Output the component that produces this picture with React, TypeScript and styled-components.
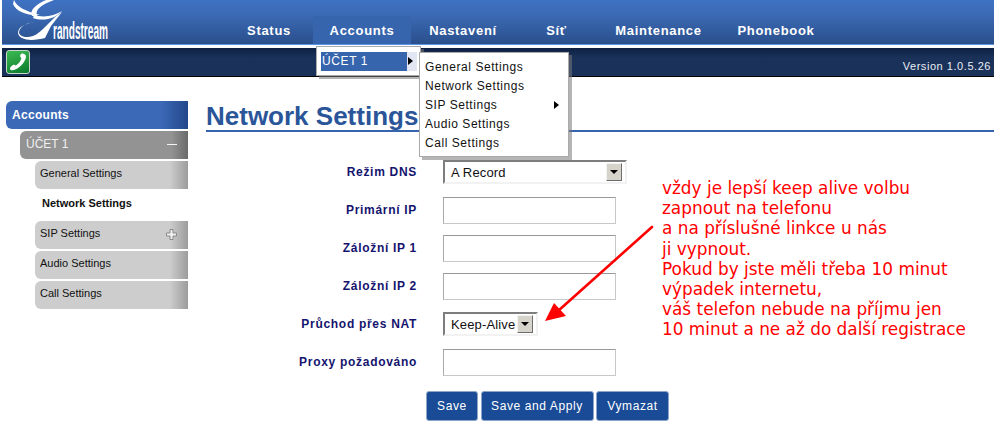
import React from "react";
import styled, { createGlobalStyle } from "styled-components";

const Global = createGlobalStyle`
  html, body { margin: 0; padding: 0; background: #fff; }
  body { font-family: "Liberation Sans", Arial, sans-serif; overflow: hidden; }
  * { box-sizing: border-box; }
`;

const Page = styled.div`
  position: relative;
  width: 994px;
  height: 439px;
  padding-left: 2px;
  overflow: hidden;
`;

const NavBar = styled.header`
  position: relative;
  display: flex;
  align-items: flex-end;
  height: 45px;
  padding-left: 223px;
  background: linear-gradient(#3f72c4 0%, #3c6bb6 30%, #2a4f8c 100%);
  border-bottom: 1px solid #5b93e6;
`;

const LogoSlot = styled.svg`
  position: absolute;
  left: -2px;
  top: 0;
`;

const NavItem = styled.div<{ $w: number; $active?: boolean }>`
  width: ${(p) => p.$w}px;
  height: 28px;
  display: flex;
  align-items: center;
  justify-content: center;
  color: #fff;
  font-size: 13px;
  font-weight: 700;
  letter-spacing: 0.7px;
  background: ${(p) => (p.$active ? "#3765ad" : "transparent")};
`;

const StatusBar = styled.div`
  display: flex;
  align-items: center;
  justify-content: space-between;
  height: 29px;
  margin-top: 3px;
  padding: 0 3px 0 4px;
  background: linear-gradient(#0e2143 0%, #1a3159 35%, #1a3159 100%);
  border-bottom: 1px solid #000;
`;

const PhoneBadge = styled.div`
  width: 24px;
  height: 24px;
  display: flex;
  align-items: center;
  justify-content: center;
  border: 1px solid #c9d6c9;
  border-radius: 3px;
  background: linear-gradient(160deg, #3dbb55, #0a7a2a);
`;

const Version = styled.span`
  padding-top: 8px;
  color: #e8edf5;
  font-size: 11px;
  letter-spacing: 0.55px;
`;

const Body = styled.div`
  display: flex;
  padding: 24px 0 0 4px;
`;

const Sidebar = styled.nav`
  width: 182px;
  display: flex;
  flex-direction: column;
  gap: 2px;
`;

const SideHead = styled.div`
  height: 28px;
  display: flex;
  align-items: center;
  padding-left: 6px;
  color: #fff;
  font-size: 12px;
  font-weight: 700;
  letter-spacing: 0.3px;
  border-radius: 6px 0 0 6px;
  background: linear-gradient(90deg, #3b69b7 0%, #3b69b7 85%, #24478a 100%);
`;

const SideGroup = styled.div`
  height: 28px;
  margin-left: 14px;
  display: flex;
  align-items: center;
  justify-content: space-between;
  padding: 0 11px 2px 6px;
  color: #f0f0f0;
  font-size: 12px;
  border-radius: 6px 0 0 6px;
  background: linear-gradient(90deg, #939393 0%, #939393 90%, #6a6a6a 100%);
`;

const SideItem = styled.div<{ $current?: boolean }>`
  height: 28px;
  margin-left: 29px;
  display: flex;
  align-items: center;
  justify-content: space-between;
  padding: 0 11px 4px ${(p) => (p.$current ? "7px" : "5px")};
  color: #111;
  font-size: 11px;
  font-weight: ${(p) => (p.$current ? 700 : 400)};
  border-radius: 6px 0 0 6px;
  background: ${(p) =>
    p.$current ? "transparent" : "linear-gradient(90deg, #cdcdcd 0%, #cdcdcd 88%, #9c9c9c 100%)"};
`;

const PlusIcon = styled.svg`
  margin-top: 3px;
`;

const Main = styled.main`
  flex: 1;
  padding-left: 18px;
`;

const Title = styled.h1`
  margin: 0;
  height: 31px;
  font-size: 26px;
  line-height: 30px;
  font-weight: 700;
  color: #2a5599;
  border-bottom: 2px solid #3765ad;
`;

const Form = styled.div`
  display: flex;
  flex-direction: column;
  padding-top: 21px;
`;

const Row = styled.div`
  display: flex;
  align-items: center;
  height: 38px;
  gap: 26px;
`;

const Label = styled.label`
  width: 211px;
  text-align: right;
  color: #14146e;
  font-size: 12px;
  font-weight: 700;
  letter-spacing: 0.7px;
`;

const TextBox = styled.div`
  width: 173px;
  height: 27px;
  background: #fff;
  border: 1px solid #c8c8c8;
  border-top-color: #999;
  border-left-color: #aaa;
`;

const Combo = styled.div<{ $w: number }>`
  width: ${(p) => p.$w}px;
  height: 24px;
  display: flex;
  align-items: center;
  justify-content: space-between;
  padding: 0 3px 0 6px;
  background: #fff;
  border: 2px solid #f2f2f2;
  border-top-color: #7d7d7d;
  border-left-color: #7d7d7d;
  font-size: 13px;
  letter-spacing: 0.15px;
  color: #111;
  white-space: nowrap;
`;

const ComboButton = styled.span`
  width: 16px;
  height: 18px;
  flex: none;
  display: flex;
  align-items: center;
  justify-content: center;
  background: #d6d3cb;
  border: 1px solid;
  border-color: #f4f4f4 #6e6e6e #6e6e6e #f4f4f4;
`;

const DownTriangle = styled.i`
  width: 0;
  height: 0;
  border-left: 4px solid transparent;
  border-right: 4px solid transparent;
  border-top: 4px solid #000;
`;

const Actions = styled.div`
  display: flex;
  gap: 2.5px;
  padding: 10px 0 0 220px;
`;

const ActionButton = styled.button<{ $w: number }>`
  width: ${(p) => p.$w}px;
  height: 30px;
  padding: 0;
  font-family: inherit;
  font-size: 12px;
  letter-spacing: 0.6px;
  color: #fff;
  background: #1a4b96;
  border: 1px solid #8ba6c9;
  border-radius: 3px;
`;

const MenuPanel = styled.div`
  position: absolute;
  background: #fff;
  border: 1px solid #aaa;
  box-shadow: 3px 3px 0 rgba(120, 120, 120, 0.55);
`;

const AccountMenu = styled(MenuPanel)`
  left: 316px;
  top: 46px;
  width: 105px;
  height: 30px;
  padding: 5px 3px 0 4px;
`;

const AccountEntry = styled.div`
  display: flex;
  height: 19px;
  background: #e2e6f3;
`;

const AccountLabel = styled.span`
  width: 86px;
  padding-left: 1px;
  background: #3765ad;
  color: #fff;
  font-size: 12px;
  line-height: 18px;
  letter-spacing: 0.6px;
`;

const RightTriangle = styled.i`
  width: 0;
  height: 0;
  border-top: 4px solid transparent;
  border-bottom: 4px solid transparent;
  border-left: 5px solid #000;
`;

const EntryArrow = styled(RightTriangle)`
  margin: 5px 0 0 1px;
`;

const SubMenu = styled(MenuPanel)`
  left: 419px;
  top: 52px;
  width: 150px;
  height: 105px;
  padding: 4px 9px 0 5px;
`;

const SubEntry = styled.div`
  display: flex;
  align-items: center;
  justify-content: space-between;
  height: 19px;
  font-size: 12px;
  letter-spacing: 0.55px;
  color: #111;
`;

const Note = styled.div`
  position: absolute;
  left: 662px;
  top: 178px;
  font-family: "DejaVu Sans", sans-serif;
  font-size: 16.9px;
  line-height: 20.2px;
  color: #f00;
  white-space: nowrap;
`;

const NoteArrow = styled.svg`
  position: absolute;
  left: 530px;
  top: 215px;
`;

const noteLines = [
  "vždy je lepší keep alive volbu",
  "zapnout na telefonu",
  "a na příslušné linkce u nás",
  "ji vypnout.",
  "Pokud by jste měli třeba 10 minut",
  "výpadek internetu,",
  "váš telefon nebude na příjmu jen",
  "10 minut a ne až do další registrace",
];

const Logo = () => (
  <LogoSlot width="170" height="44" viewBox="0 0 170 44">
    <path d="M14 0C17 7 25 11 40 15C29 16 16 12 13 4Z" fill="#fff" />
    <path d="M46 0C37 4 29 10 32 16L37 16C35 10 40 5 54 0Z" fill="#fff" />
    <path d="M34 15C44 18 54 16 62 11C56 18 44 22 33 18Z" fill="#fff" />
    <path
      d="M36 22C28 22 20 26 19 32C19 37 27 38 33 36C38 34 42 30 46 26L55 17L62 12L51 26L45 38C38 40 27 41 22 38C17 36 17 30 21 27C25 24 31 22 36 22Z"
      fill="#fff"
    />
    <text
      x="53"
      y="39"
      fontFamily="Liberation Sans, sans-serif"
      fontWeight="700"
      fontSize="23"
      fill="#fff"
      textLength="55"
      lengthAdjust="spacingAndGlyphs"
    >
      randstream
    </text>
  </LogoSlot>
);

const PhoneIcon = () => (
  <svg width="20" height="20" viewBox="0 0 20 20">
    <path
      d="M14 1.5C13 1.6 12.5 2.5 12.2 3.6C12 4.8 12.5 5.5 13.4 6C13 8.6 10.6 12 7.8 13.4C7 12.6 6 12.4 5 13C3.6 13.7 2.2 15.2 2 16.4C1.9 17.6 3 18.4 4.6 18.2C10 17.6 17.4 10.8 18 4.8C18.2 2.8 16 1.3 14 1.5Z"
      fill="#fff"
    />
  </svg>
);

const App = () => (
  <Page>
    <Global />
    <NavBar>
      <Logo />
      <NavItem $w={88}>Status</NavItem>
      <NavItem $w={98} $active>Accounts</NavItem>
      <NavItem $w={104}>Nastavení</NavItem>
      <NavItem $w={83}>Síť</NavItem>
      <NavItem $w={121}>Maintenance</NavItem>
      <NavItem $w={114}>Phonebook</NavItem>
    </NavBar>
    <StatusBar>
      <PhoneBadge><PhoneIcon /></PhoneBadge>
      <Version>Version 1.0.5.26</Version>
    </StatusBar>
    <Body>
      <Sidebar>
        <SideHead>Accounts</SideHead>
        <SideGroup>
          ÚČET 1
          <svg width="10" height="10" viewBox="0 0 10 10"><path d="M0 5.5H10" stroke="#f4f4f4" strokeWidth="1" /></svg>
        </SideGroup>
        <SideItem>General Settings</SideItem>
        <SideItem $current>Network Settings</SideItem>
        <SideItem>
          SIP Settings
          <PlusIcon width="11" height="11" viewBox="0 0 11 11"><path d="M4 0.5H7V4H10.5V7H7V10.5H4V7H0.5V4H4Z" fill="#efefef" stroke="#8a8a8a" strokeWidth="1" /></PlusIcon>
        </SideItem>
        <SideItem>Audio Settings</SideItem>
        <SideItem>Call Settings</SideItem>
      </Sidebar>
      <Main>
        <Title>Network Settings</Title>
        <Form>
          <Row>
            <Label>Režim DNS</Label>
            <Combo $w={184}>A Record<ComboButton><DownTriangle /></ComboButton></Combo>
          </Row>
          <Row><Label>Primární IP</Label><TextBox /></Row>
          <Row><Label>Záložní IP 1</Label><TextBox /></Row>
          <Row><Label>Záložní IP 2</Label><TextBox /></Row>
          <Row>
            <Label>Průchod přes NAT</Label>
            <Combo $w={95}>Keep-Alive<ComboButton><DownTriangle /></ComboButton></Combo>
          </Row>
          <Row><Label>Proxy požadováno</Label><TextBox /></Row>
          <Actions>
            <ActionButton $w={52}>Save</ActionButton>
            <ActionButton $w={113}>Save and Apply</ActionButton>
            <ActionButton $w={73}>Vymazat</ActionButton>
          </Actions>
        </Form>
      </Main>
    </Body>
    <AccountMenu>
      <AccountEntry>
        <AccountLabel>ÚČET 1</AccountLabel>
        <EntryArrow />
      </AccountEntry>
    </AccountMenu>
    <SubMenu>
      <SubEntry>General Settings</SubEntry>
      <SubEntry>Network Settings</SubEntry>
      <SubEntry>SIP Settings<RightTriangle /></SubEntry>
      <SubEntry>Audio Settings</SubEntry>
      <SubEntry>Call Settings</SubEntry>
    </SubMenu>
    <Note>
      {noteLines.map((l) => <div key={l}>{l}</div>)}
    </Note>
    <NoteArrow width="130" height="115" viewBox="0 0 130 115">
      <path d="M122 12L28 96" stroke="#f00" strokeWidth="2.6" strokeLinecap="round" />
      <path d="M15 106L24 88L36 101Z" fill="#f00" />
    </NoteArrow>
  </Page>
);

export default App;
